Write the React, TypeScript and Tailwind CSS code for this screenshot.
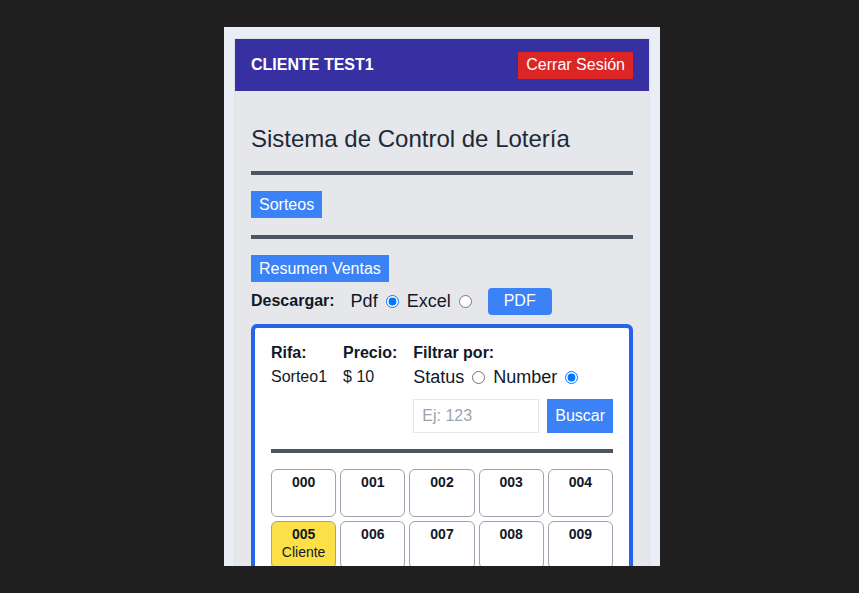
import React from 'react';

const tickets = Array.from({ length: 10 }, (_, i) => String(i).padStart(3, '0'));

const Radio = ({ checked, className }: { checked?: boolean; className?: string }) => (
  <input type="radio" defaultChecked={checked} className={`w-[13px] h-[13px] ${className ?? ''}`} />
);

export default function App() {
  return (
    <div className="min-h-screen bg-[#201f1f] pl-[224px] pt-[27px]" style={{ fontFamily: '"Liberation Sans", Arial, sans-serif' }}>
      <div className="w-[436px] h-[539px] overflow-hidden bg-[#e9eef6] px-[10px] pt-[11px]">
        <div className="border border-[#dde1e7] bg-[#e5e7eb] min-h-[600px]">
          {/* Header */}
          <div className="h-[52px] bg-[#3730a3] flex items-center justify-between px-4">
            <span className="text-white font-bold text-base">CLIENTE TEST1</span>
            <button className="h-[27px] px-2 bg-[#dc2626] text-white text-base">Cerrar Sesión</button>
          </div>

          <div className="px-4 pt-8">
            <h1 className="text-2xl leading-8 text-[#1f2937]">Sistema de Control de Lotería</h1>
            <div className="h-1 bg-[#4b5563] mt-4" />
            <button className="mt-4 h-[27px] px-2 bg-[#3b82f6] text-white text-base">Sorteos</button>
            <div className="h-1 bg-[#4b5563] mt-[17px]" />
            <button className="mt-4 h-[27px] px-2 bg-[#3b82f6] text-white text-base">Resumen Ventas</button>

            {/* Descargar */}
            <div className="mt-[5px] flex items-center text-[#111827]">
              <span className="font-bold text-base mr-4">Descargar:</span>
              <span className="text-lg">Pdf</span>
              <Radio checked className="mx-[8px]" />
              <span className="text-lg">Excel</span>
              <Radio className="ml-[8px] mr-[16px]" />
              <button className="h-[27px] w-16 rounded-sm bg-[#3b82f6] text-white text-base">PDF</button>
            </div>

            {/* Card */}
            <div className="mt-[9px] border-4 border-[#2563eb] rounded-md bg-white px-4 pt-[13px] pb-4 text-[#111827]">
              <div className="flex gap-4">
                <div>
                  <div className="font-bold leading-6">Rifa:</div>
                  <div className="leading-6">Sorteo1</div>
                </div>
                <div>
                  <div className="font-bold leading-6">Precio:</div>
                  <div className="leading-6">$ 10</div>
                </div>
                <div className="flex-1 min-w-0">
                  <div className="font-bold leading-6">Filtrar por:</div>
                  <div className="flex items-center text-lg leading-6">
                    <span>Status</span>
                    <Radio className="mx-[8px]" />
                    <span>Number</span>
                    <Radio checked className="ml-[8px]" />
                  </div>
                  <div className="mt-[10px] flex gap-2">
                    <input
                      placeholder="Ej: 123"
                      className="flex-1 min-w-0 h-[34px] border border-[#e5e7eb] px-2 text-base placeholder:text-[#9ca3af] outline-none"
                    />
                    <button className="h-[34px] px-2 bg-[#3b82f6] text-white text-base">Buscar</button>
                  </div>
                </div>
              </div>

              <div className="h-1 bg-[#4b5563] mt-4" />

              <div className="mt-4 grid grid-cols-5 gap-1">
                {tickets.map((t) => (
                  <div
                    key={t}
                    className={`h-12 rounded-md border border-[#9ca3af] pt-[2px] text-center text-sm ${t === '005' ? 'bg-[#fde047]' : 'bg-white'}`}
                  >
                    <div className="font-bold leading-5">{t}</div>
                    {t === '005' && <div className="leading-4">Cliente</div>}
                  </div>
                ))}
              </div>
            </div>
          </div>
        </div>
      </div>
    </div>
  );
}
